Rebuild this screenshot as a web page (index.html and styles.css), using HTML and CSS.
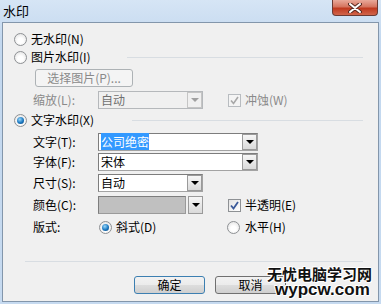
FILE: index.html
```html
<!DOCTYPE html>
<html>
  <head>
    <meta charset="UTF-8" />
    <link rel="stylesheet" href="styles.css">
  </head>
  <body>
    <div class="window">
      <div class="titlebar">
        <span class="title">水印</span>
        <div class="close">
          <svg width="14" height="10" viewBox="0 0 14 10">
            <path d="M2 1 L12 9 M12 1 L2 9" stroke="#5a2a22" stroke-width="4" stroke-linecap="round"/>
            <path d="M2 1 L12 9 M12 1 L2 9" stroke="#fff" stroke-width="2" stroke-linecap="round"/>
          </svg>
        </div>
      </div>

      <div class="client">
        <div class="row opt">
          <span class="radio"></span><span>无水印(N)</span>
        </div>
        <div class="row opt">
          <span class="radio"></span><span>图片水印(I)</span>
          <span class="rule rule-pic"></span>
        </div>
        <div class="row pick">
          <span class="btn btn-off">选择图片(P)...</span>
        </div>
        <div class="row field">
          <span class="label off">缩放(L):</span>
          <span class="combo short combo-off"><span class="val">自动</span><span class="arrow"></span></span>
          <span class="check check-off"><svg width="11" height="11" viewBox="0 0 11 11"><path d="M2 5.5 L4.5 8.5 L9 2" fill="none" stroke="#a8a8a8" stroke-width="1.6"/></svg></span>
          <span class="off">冲蚀(W)</span>
        </div>
        <div class="row opt opt-text">
          <span class="radio radio-on"></span><span>文字水印(X)</span>
          <span class="rule rule-text"></span>
        </div>
        <div class="row field f-text">
          <span class="label">文字(T):</span>
          <span class="combo wide"><span class="val"><span class="sel">公司绝密</span></span><span class="arrow"></span></span>
        </div>
        <div class="row field f-font">
          <span class="label">字体(F):</span>
          <span class="combo wide"><span class="val">宋体</span><span class="arrow"></span></span>
        </div>
        <div class="row field f-size">
          <span class="label">尺寸(S):</span>
          <span class="combo short"><span class="val">自动</span><span class="arrow"></span></span>
        </div>
        <div class="row field f-color">
          <span class="label">颜色(C):</span>
          <span class="combo short combo-color"><span class="swatch"></span><span class="arrow"></span></span>
          <span class="check"><svg width="11" height="11" viewBox="0 0 11 11"><path d="M2 5.5 L4.5 8.5 L9 2" fill="none" stroke="#3b5a9a" stroke-width="1.8"/></svg></span>
          <span>半透明(E)</span>
        </div>
        <div class="row field f-layout">
          <span class="label">版式:</span>
          <span class="choice"><span class="radio radio-on"></span><span>斜式(D)</span></span>
          <span class="radio"></span><span>水平(H)</span>
        </div>

        <div class="rule rule-foot"></div>

        <div class="row actions">
          <span class="btn btn-ok">确定</span>
          <span class="btn">取消</span>
        </div>
      </div>

      <div class="stamp">
        <div class="stamp-cn">无忧电脑学习网</div>
        <div class="stamp-en">wypcw.com</div>
      </div>
    </div>
  </body>
</html>
```

FILE: styles.css
```css
* {
  margin: 0;
  padding: 0;
  box-sizing: border-box;
}
body {
  width: 381px;
  height: 304px;
  overflow: hidden;
  font-family: "Noto Sans CJK SC", "Liberation Sans", sans-serif;
  font-size: 12px;
  color: #000;
}
.window {
  position: relative;
  width: 381px;
  height: 304px;
  background: linear-gradient(to bottom, #d6e5f5, #c3d8ef 40px, #c6daf0);
}
.titlebar {
  display: flex;
  justify-content: space-between;
  height: 22px;
  padding: 0 3px 0 3px;
}
.title {
  font-size: 13px;
  line-height: 22px;
}
.close {
  width: 46px;
  height: 16px;
  border: 1px solid #6b3a33;
  border-top: none;
  border-radius: 0 0 4px 4px;
  background: linear-gradient(to bottom, #e9a99a, #d5745f 45%, #c0391f 55%, #d1654b);
  display: flex;
  align-items: center;
  justify-content: center;
}
.client {
  margin: 0 2px;
  height: 280px;
  border: 1px solid #8396ab;
  background: #f0f0f0;
  padding-top: 7px;
}
.row {
  display: flex;
  align-items: center;
  height: 18px;
  line-height: 18px;
  white-space: nowrap;
}
.opt {
  padding-left: 11px;
  padding-right: 15px;
}
.opt .radio {
  margin-right: 4px;
}
.opt-text {
  margin-top: 2px;
}
.rule {
  height: 1px;
  background: #d8dde2;
}
.rule-pic {
  margin-left: auto;
  width: 236px;
}
.rule-text {
  margin-left: auto;
  width: 231px;
}
.rule-foot {
  margin: 25px 15px 0 22px;
}
.pick {
  margin-top: 3px;
  padding-left: 32px;
}
.field {
  margin-top: 4px;
  padding-left: 30px;
}
.f-font {
  margin-top: 2px;
}
.f-size {
  margin-top: 3px;
}
.label {
  width: 65px;
}
.off {
  color: #8a8a8a;
}

/* radio & check */
.radio {
  width: 13px;
  height: 13px;
  border-radius: 50%;
  border: 1px solid #8e9194;
  background: radial-gradient(circle at 50% 60%, #fff 30%, #dcdcdc);
  display: inline-flex;
  align-items: center;
  justify-content: center;
  flex: none;
}
.radio-on::after {
  content: "";
  width: 7px;
  height: 7px;
  border-radius: 50%;
  background: radial-gradient(circle at 40% 35%, #9ad8fa, #1a77c0 55%, #0b3f70);
}
.check {
  width: 13px;
  height: 13px;
  border: 1px solid #8e9194;
  background: linear-gradient(to bottom right, #e3e3e3, #fff);
  display: inline-flex;
  align-items: center;
  justify-content: center;
  margin-left: 25px;
  margin-right: 4px;
  flex: none;
}
.check-off {
  border-color: #b8bcc0;
  background: #f4f4f4;
}

/* combos */
.combo {
  display: flex;
  align-items: center;
  height: 18px;
  border: 1px solid #a3a3a3;
  border-top-color: #7d7d7d;
  border-left-color: #7d7d7d;
  background: #fff;
}
.wide {
  width: 160px;
}
.short {
  width: 105px;
}
.val {
  flex: 1;
  padding-left: 2px;
  line-height: 16px;
}
.sel {
  background: #3399ff;
  color: #fff;
}
.arrow {
  width: 15px;
  height: 16px;
  border: 1px solid #9a9a9a;
  background: linear-gradient(to bottom, #f6f6f6, #dadada);
  display: flex;
  align-items: center;
  justify-content: center;
}
.arrow::after {
  content: "";
  border-left: 4px solid transparent;
  border-right: 4px solid transparent;
  border-top: 4px solid #000;
}
.combo-off {
  background: #f0f0f0;
  border-color: #b5b8bb;
  color: #707070;
}
.combo-off .arrow {
  border-color: #c5c5c5;
  background: #f0f0f0;
}
.combo-off .arrow::after {
  border-top-color: #a0a0a0;
}
.combo-color {
  background: #f0f0f0;
  border: none;
}
.swatch {
  width: 88px;
  height: 18px;
  margin-right: 2px;
  border: 1px solid #9a9a9a;
  border-top-color: #7d7d7d;
  border-left-color: #7d7d7d;
  background: #c0c0c0;
}
.combo-color .arrow {
  height: 18px;
}
.choice {
  display: flex;
  align-items: center;
  width: 129px;
  padding-left: 1px;
}
.choice .radio {
  margin-right: 4px;
}
.f-layout > .radio {
  margin-right: 5px;
}

/* buttons */
.btn {
  display: inline-flex;
  align-items: center;
  justify-content: center;
  height: 18px;
  width: 71px;
  border: 1px solid #707070;
  border-radius: 3px;
  background: linear-gradient(to bottom, #f2f2f2 0%, #ebebeb 50%, #dddddd 51%, #cfcfcf 100%);
}
.btn-off {
  width: 98px;
  border-color: #adb2b5;
  background: #f4f4f4;
  color: #8a8a8a;
}
.btn-ok {
  border-color: #3c7fb1;
}
.actions {
  margin-top: 14px;
  padding-left: 131px;
  gap: 10px;
}

/* site stamp over the corner */
.stamp {
  position: absolute;
  left: 267px;
  top: 266px;
  font-weight: bold;
  color: #111;
  text-shadow: 1px 0 #fff, -1px 0 #fff, 0 1px #fff, 0 -1px #fff, 1px 1px #fff, -1px -1px #fff;
}
.stamp-cn {
  font-size: 15px;
  line-height: 16px;
}
.stamp-en {
  font-family: "Liberation Sans", sans-serif;
  font-size: 17px;
  line-height: 16px;
  padding-left: 8px;
}
```
